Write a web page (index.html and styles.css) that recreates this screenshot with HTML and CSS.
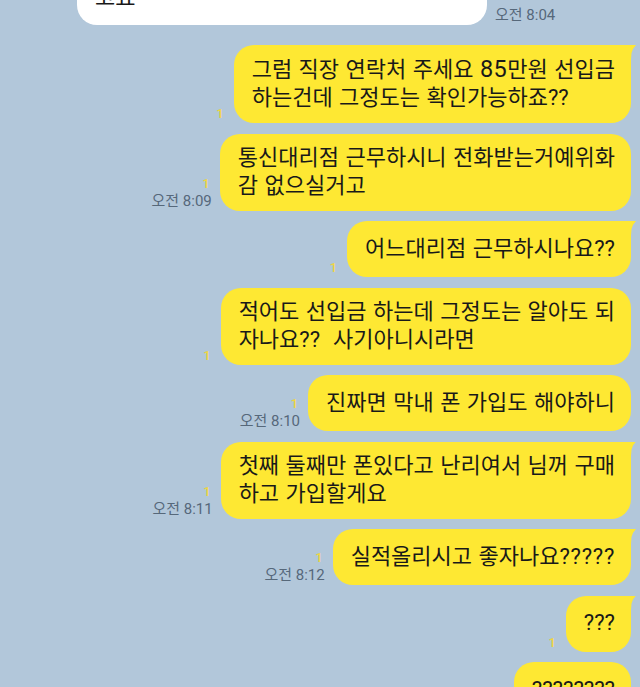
FILE: index.html
```html
<!DOCTYPE html>
<html lang="ko">
<head>
  <meta charset="UTF-8">
  <title>채팅</title>
  <link rel="stylesheet" href="styles.css">
</head>
<body>
  <div class="chat">
    <div class="row row-in">
      <div class="bubble bubble-in"><p class="text">고요</p></div>
      <div class="meta"><span class="time">오전 8:04</span></div>
    </div>

    <div class="row row-out">
      <div class="meta"><span class="unread">1</span></div>
      <div class="bubble bubble-out tail"><p class="text">그럼 직장 연락처 주세요 <span class="num">85</span>만원 선입금<br>하는건데 그정도는 확인가능하죠??</p></div>
    </div>
    <div class="row row-out">
      <div class="meta"><span class="unread">1</span><span class="time">오전 8:09</span></div>
      <div class="bubble bubble-out"><p class="text">통신대리점 근무하시니 전화받는거예위화<br>감 없으실거고</p></div>
    </div>

    <div class="row row-out">
      <div class="meta"><span class="unread">1</span></div>
      <div class="bubble bubble-out tail"><p class="text">어느대리점 근무하시나요??</p></div>
    </div>
    <div class="row row-out">
      <div class="meta"><span class="unread">1</span></div>
      <div class="bubble bubble-out"><p class="text">적어도 선입금 하는데 그정도는 알아도 되<br>자나요??&nbsp; 사기아니시라면</p></div>
    </div>
    <div class="row row-out">
      <div class="meta"><span class="unread">1</span><span class="time">오전 8:10</span></div>
      <div class="bubble bubble-out"><p class="text">진짜면 막내 폰 가입도 해야하니</p></div>
    </div>

    <div class="row row-out">
      <div class="meta"><span class="unread">1</span><span class="time">오전 8:11</span></div>
      <div class="bubble bubble-out tail"><p class="text">첫째 둘째만 폰있다고 난리여서 님꺼 구매<br>하고 가입할게요</p></div>
    </div>

    <div class="row row-out">
      <div class="meta"><span class="unread">1</span><span class="time">오전 8:12</span></div>
      <div class="bubble bubble-out tail"><p class="text">실적올리시고 좋자나요<span class="q">?????</span></p></div>
    </div>

    <div class="row row-out">
      <div class="meta"><span class="unread">1</span></div>
      <div class="bubble bubble-out tail"><p class="text">???</p></div>
    </div>
    <div class="row row-out">
      <div class="meta"><span class="unread">1</span></div>
      <div class="bubble bubble-out"><p class="text">????????</p></div>
    </div>
  </div>
</body>
</html>
```

FILE: styles.css
```css
body {
  margin: 0;
  height: 687px;
  overflow: hidden;
  background: #b2c7da;
  font-family: Roboto, "Noto Sans CJK KR", sans-serif;
  color: #191919;
}
.chat {
  display: flex;
  flex-direction: column;
  gap: 10.5px;
  margin-top: -26px;
}
.row {
  display: flex;
  align-items: flex-end;
}
.row-in {
  padding-left: 77px;
  margin-bottom: 9.5px;
}
.row-out {
  justify-content: flex-end;
  padding-right: 9px;
}
.bubble {
  position: relative;
  box-sizing: border-box;
  min-height: 56px;
  display: flex;
  align-items: center;
  padding: 10px 16px 11px 18px;
  border-radius: 20px;
  font-size: 22px;
  line-height: 28px;
  word-spacing: 1px;
  white-space: nowrap;
}
.text {
  margin: 0;
}
.bubble-in {
  width: 410px;
  min-height: 0;
  background: #fff;
  padding-bottom: 13px;
}
.bubble-out {
  background: #fee833;
}
.num {
  font-size: 23.5px;
  letter-spacing: 0.5px;
}
.q {
  letter-spacing: 0.7px;
}
.tail {
  border-top-right-radius: 4px;
}
.tail::after {
  content: '';
  position: absolute;
  top: 0;
  right: -5px;
  width: 16px;
  height: 14px;
  background: #fee833;
  clip-path: polygon(0 0, 100% 0, 81% 28%, 72% 58%, 69% 100%, 0 100%);
}
.meta {
  display: flex;
  flex-direction: column;
  align-items: flex-end;
  margin: 0 8px 1px 0;
}
.row-in .meta {
  margin: 0 0 1px 8px;
}
.unread {
  font-size: 13px;
  font-weight: 500;
  line-height: 16px;
  color: #efd540;
  padding-right: 2px;
}
.time {
  font-size: 15px;
  line-height: 18px;
  color: #56687a;
}
```
